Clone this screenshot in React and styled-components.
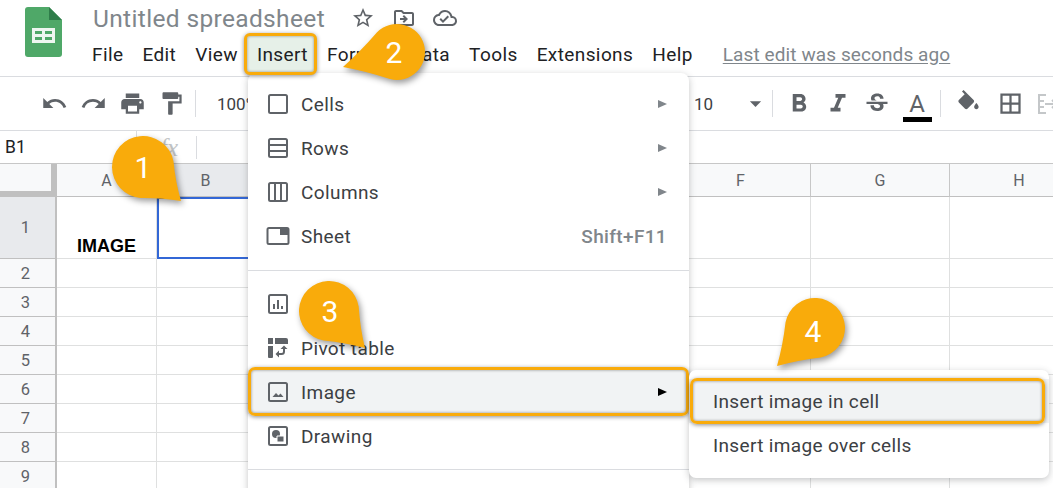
import React from "react";
import styled, { createGlobalStyle } from "styled-components";
import {
  MdUndo,
  MdRedo,
  MdPrint,
  MdFormatPaint,
  MdFormatBold,
  MdFormatItalic,
  MdStrikethroughS,
  MdBorderAll,
  MdStarBorder,
  MdOutlineDriveFileMove,
  MdOutlineCloudDone,
  MdArrowDropDown,
} from "react-icons/md";

const ORANGE = "#f9ab0b";
const GREY = "#5f6368";

const GlobalStyle = createGlobalStyle`
  html, body {
    margin: 0;
    background: #fff;
    overflow: hidden;
  }
  body {
    font-family: Roboto, "Liberation Sans", sans-serif;
  }
`;

const Page = styled.div`
  position: relative;
  width: 1053px;
  height: 488px;
  overflow: hidden;
  background: #fff;
`;

const Header = styled.header`
  display: flex;
  height: 76px;
  border-bottom: 1px solid #dadce0;
  padding-left: 25px;
`;

const Logo = styled.svg`
  width: 37px;
  height: 50px;
  margin-top: 7px;
  flex: none;
`;

const TitleColumn = styled.div`
  margin-left: 30px;
  display: flex;
  flex-direction: column;
`;

const TitleRow = styled.div`
  display: flex;
  align-items: center;
  height: 36px;
`;

const Title = styled.span`
  font-size: 24.5px;
  color: #80868b;
  margin-left: 1px;
  letter-spacing: 0.35px;
  width: 249px;
`;

const TitleIcon = styled.span`
  display: flex;
  justify-content: center;
  width: 41px;
  color: ${GREY};
  font-size: 24px;
`;

const MenuBar = styled.nav`
  display: flex;
  align-items: center;
  gap: 19px;
  height: 36px;
`;

const MenuLabel = styled.span`
  position: relative;
  z-index: ${(p) => (p.$active ? 5 : 1)};
  font-size: 19px;
  letter-spacing: 0.4px;
  color: #202124;

  ${(p) =>
    p.$active &&
    `
    &::before {
      content: "";
      position: absolute;
      z-index: -1;
      left: -13px;
      right: -9px;
      top: -10px;
      bottom: -9px;
      background: #e6f0e8;
      border: 3px solid ${ORANGE};
      border-radius: 6px;
      box-shadow: 0 1px 4px rgba(0, 0, 0, 0.45), inset 0 0 3px rgba(0, 0, 0, 0.4);
    }
  `}
`;

const LastEdit = styled.span`
  margin-left: 11px;
  font-size: 19px;
  letter-spacing: 0.1px;
  color: #80868b;
  text-decoration: underline;
  text-underline-offset: 2px;
`;

const Toolbar = styled.div`
  display: flex;
  align-items: center;
  height: 53px;
  padding-left: 35px;
  border-bottom: 1px solid #dadce0;
  color: ${GREY};
`;

const ToolButton = styled.span`
  display: flex;
  align-items: center;
  justify-content: center;
  flex: none;
  width: ${(p) => p.$w || 39}px;
  font-size: ${(p) => p.$size || 27}px;
  color: ${GREY};
`;

const ToolSep = styled.span`
  flex: none;
  width: 1px;
  height: 27px;
  background: #dadce0;
  margin: 0 ${(p) => p.$right || 0}px 0 ${(p) => p.$left || 0}px;
`;

const ToolText = styled.span`
  flex: none;
  width: ${(p) => p.$w}px;
  margin-left: ${(p) => p.$left || 0}px;
  font-size: 17px;
  color: #3c4043;
`;

const ColorA = styled.span`
  display: flex;
  flex-direction: column;
  align-items: center;
  flex: none;
  width: 40px;
  margin: 5px 0 0 1px;
  font-size: 24px;
  line-height: 26px;
  color: ${GREY};

  &::after {
    content: "";
    width: 29px;
    height: 5px;
    background: #000;
  }
`;

const FormulaBar = styled.div`
  display: flex;
  align-items: center;
  height: 32px;
  border-bottom: 1px solid #c7c7c7;
`;

const CellRef = styled.span`
  width: 131px;
  padding-left: 5px;
  font-size: 17.5px;
  color: #202124;
  border-right: 1px solid #dadce0;
  line-height: 32px;
`;

const Fx = styled.span`
  width: 60px;
  padding-left: 23px;
  box-sizing: border-box;
  font-family: "Liberation Serif", serif;
  font-style: italic;
  font-size: 25px;
  color: #c4c7c9;
  border-right: 1px solid #dadce0;
  line-height: 23px;
`;

const Sheet = styled.div`
  display: grid;
  grid-template-columns: 57px 100px 98px 140px 138px 138px 140px 139px 139px;
  grid-template-rows: 33px 62px repeat(8, 29px);
`;

const Corner = styled.div`
  background: #f8f9fa;
  border-right: 6px solid #c0c0c0;
  border-bottom: 6px solid #c0c0c0;
  box-sizing: border-box;
`;

const ColHead = styled.div`
  display: flex;
  align-items: center;
  justify-content: center;
  box-sizing: border-box;
  background: ${(p) => (p.$selected ? "#e8eaed" : "#f8f9fa")};
  border-right: 1px solid #c7c7c7;
  border-bottom: 1px solid #c0c0c0;
  font-size: 16px;
  color: ${GREY};
`;

const RowHead = styled.div`
  display: flex;
  align-items: center;
  justify-content: center;
  box-sizing: border-box;
  padding-right: 4px;
  background: ${(p) => (p.$selected ? "#e8eaed" : "#f8f9fa")};
  border-right: 2px solid #c0c0c0;
  border-bottom: 1px solid #c0c0c0;
  font-size: 16.5px;
  color: ${GREY};
`;

const Cell = styled.div`
  display: flex;
  align-items: flex-end;
  justify-content: center;
  box-sizing: border-box;
  border-right: 1px solid #dfe0e0;
  border-bottom: 1px solid #dfe0e0;
  font-family: "Liberation Sans", sans-serif;
  font-weight: 700;
  font-size: 18px;
  line-height: 24px;
  color: #000;
  ${(p) => p.$selected && "border: 2px solid #3367d6;"}
`;

const Menu = styled.div`
  position: absolute;
  z-index: 3;
  left: 248px;
  top: 73px;
  width: 441px;
  height: 440px;
  box-sizing: border-box;
  padding-top: 9px;
  background: #fff;
  border-radius: 8px;
  box-shadow: 0 2px 7px rgba(60, 64, 67, 0.3);
`;

const MenuRow = styled.div`
  position: relative;
  display: flex;
  align-items: center;
  height: 44px;
  padding: 0 22px 0 18px;
  font-size: 19px;
  letter-spacing: 0.4px;
  color: #3c4043;
  ${(p) => p.$active && "background: #f1f3f4;"}

  ${(p) =>
    p.$active &&
    `
    &::after {
      content: "";
      position: absolute;
      inset: -3px 0 -2px 0;
      border: 3px solid ${ORANGE};
      border-radius: 7px;
      box-shadow: 0 1px 4px rgba(0, 0, 0, 0.45), inset 0 0 3px rgba(0, 0, 0, 0.45);
    }
  `}
`;

const MenuIcon = styled.svg`
  flex: none;
  width: 24px;
  height: 24px;
  margin-right: 11px;
  color: ${GREY};
`;

const RowLabel = styled.span`
  flex: 1;
`;

const Arrow = styled.span`
  width: 0;
  height: 0;
  border-left: 9px solid ${(p) => (p.$dark ? "#000" : "#80868b")};
  border-top: 4.5px solid transparent;
  border-bottom: 4.5px solid transparent;
`;

const Shortcut = styled.span`
  font-weight: 500;
  font-size: 19px;
  letter-spacing: 0.35px;
  color: #80868b;
`;

const Divider = styled.div`
  height: 1px;
  margin: ${(p) => p.$top || 12}px 0 11px;
  background: #dadce0;
`;

const SubMenu = styled.div`
  position: absolute;
  z-index: 4;
  left: 689px;
  top: 370px;
  width: 360px;
  height: 108px;
  box-sizing: border-box;
  padding-top: 9px;
  background: #fff;
  border-radius: 7px;
  box-shadow: 0 2px 7px rgba(60, 64, 67, 0.3);
`;

const SubRow = styled.div`
  position: relative;
  display: flex;
  align-items: center;
  height: 44px;
  padding-left: 24px;
  font-size: 19px;
  letter-spacing: 0.35px;
  color: #3c4043;
  ${(p) => p.$active && "background: #f1f3f4;"}

  ${(p) =>
    p.$active &&
    `
    &::after {
      content: "";
      position: absolute;
      left: 1px;
      right: 4px;
      top: -1px;
      bottom: -1px;
      border: 3px solid ${ORANGE};
      border-radius: 7px;
      box-shadow: 0 1px 4px rgba(0, 0, 0, 0.45), inset 0 0 3px rgba(0, 0, 0, 0.45);
    }
  `}
`;

const Pin = styled.div`
  position: absolute;
  z-index: 6;
  left: ${(p) => p.$x}px;
  top: ${(p) => p.$y}px;
  width: 110px;
  height: 110px;
`;

const PinShape = styled.svg`
  width: 110px;
  height: 110px;
  overflow: visible;
  filter: drop-shadow(2px 3px 3px rgba(0, 0, 0, 0.4));
`;

const PinNumber = styled.span`
  position: absolute;
  left: ${(p) => p.$x}px;
  top: ${(p) => p.$y}px;
  transform: translate(-50%, -50%);
  font-size: 30px;
  line-height: 30px;
  color: #fff;
`;

// teardrop: circle plus tangent lines running out to the tip
const teardrop = (cx, cy, r, tx, ty) => {
  const d = Math.hypot(tx - cx, ty - cy);
  const a = Math.atan2(ty - cy, tx - cx);
  const b = Math.acos(r / d);
  const p1 = [cx + r * Math.cos(a + b), cy + r * Math.sin(a + b)];
  const p2 = [cx + r * Math.cos(a - b), cy + r * Math.sin(a - b)];
  const ctrl = (p) => [
    (p[0] + tx) / 2 * 0.85 + (cx + (tx - cx) * 0.6) * 0.15,
    (p[1] + ty) / 2 * 0.85 + (cy + (ty - cy) * 0.6) * 0.15,
  ];
  const c1 = ctrl(p1);
  const c2 = ctrl(p2);
  return `M${tx} ${ty}Q${c1[0]} ${c1[1]} ${p1[0]} ${p1[1]}A${r} ${r} 0 1 1 ${p2[0]} ${p2[1]}Q${c2[0]} ${c2[1]} ${tx} ${ty}Z`;
};

const pins = [
  { n: 1, x: 100, y: 125, cx: 143, cy: 167, r: 31, tx: 181, ty: 201, lx: 143, ly: 168 },
  { n: 2, x: 330, y: 10, cx: 397, cy: 52, r: 28, tx: 343, ty: 67, lx: 394, ly: 53 },
  { n: 3, x: 280, y: 270, cx: 329, cy: 311, r: 30, tx: 365, ty: 348, lx: 330, ly: 312 },
  { n: 4, x: 760, y: 285, cx: 815, cy: 328, r: 30, tx: 777, ty: 366, lx: 813, ly: 332 },
];

const menuNames = ["File", "Edit", "View", "Insert", "Format", "Data", "Tools", "Extensions", "Help"];
const columns = ["A", "B", "C", "D", "E", "F", "G", "H"];
const rows = [1, 2, 3, 4, 5, 6, 7, 8, 9];

const SheetsLogo = () => (
  <Logo viewBox="0 0 37 50">
    <path d="M3 0H24L37 13V47a3 3 0 0 1-3 3H3a3 3 0 0 1-3-3V3a3 3 0 0 1 3-3Z" fill="#4fa868" />
    <path d="M24 0L37 13H24Z" fill="#2f7d4a" />
    <path d="M7 21H30V36H7ZM10 24V27H17V24ZM20 24V27H27V24ZM10 30V33H17V30ZM20 30V33H27V30Z" fill="#eef6f0" fillRule="evenodd" />
  </Logo>
);

const CellsIcon = () => (
  <MenuIcon viewBox="0 0 24 24" fill="none" stroke="currentColor" strokeWidth="2">
    <rect x="3" y="3" width="18" height="18" rx="1.5" />
  </MenuIcon>
);

const RowsIcon = () => (
  <MenuIcon viewBox="0 0 24 24" fill="none" stroke="currentColor" strokeWidth="2">
    <rect x="3" y="3" width="18" height="18" rx="1.5" />
    <path d="M3 9h18M3 15h18" />
  </MenuIcon>
);

const ColumnsIcon = () => (
  <MenuIcon viewBox="0 0 24 24" fill="none" stroke="currentColor" strokeWidth="2">
    <rect x="3" y="3" width="18" height="18" rx="1.5" />
    <path d="M9 3v18M15 3v18" />
  </MenuIcon>
);

const SheetIcon = () => (
  <MenuIcon viewBox="0 0 24 24" fill="none" stroke="currentColor" strokeWidth="2">
    <rect x="1.5" y="4" width="21" height="16" rx="1.5" />
    <path d="M14 4h8v7h-8Z" fill="currentColor" stroke="none" />
  </MenuIcon>
);

const ChartIcon = () => (
  <MenuIcon viewBox="0 0 24 24" fill="none" stroke="currentColor" strokeWidth="2">
    <rect x="3" y="3" width="18" height="18" rx="1.5" />
    <path d="M8 17v-5M12 17V8M16 17v-3" />
  </MenuIcon>
);

const PivotIcon = () => (
  <MenuIcon viewBox="0 0 24 24" fill="currentColor">
    <path d="M2 2h5v6H2ZM9 2h11a2 2 0 0 1 2 2v4H9ZM2 10h5v11a1 1 0 0 1-1 1H3a1 1 0 0 1-1-1Z" />
    <path d="M18 9.5l3.5 3.5H19v2.5a3.5 3.5 0 0 1-3.5 3.5H13v2.5L9.5 18l3.5-3.5V17h2.5a1.5 1.5 0 0 0 1.5-1.5V13h-2.5Z" />
  </MenuIcon>
);

const ImageIcon = () => (
  <MenuIcon viewBox="0 0 24 24" fill="none" stroke="currentColor" strokeWidth="2">
    <rect x="3" y="3" width="18" height="18" rx="1.5" />
    <path d="M6.5 17l3.5-4 2.5 2.5 2-2 3 3.5Z" fill="currentColor" stroke="none" />
  </MenuIcon>
);

const DrawingIcon = () => (
  <MenuIcon viewBox="0 0 24 24" fill="none" stroke="currentColor" strokeWidth="2">
    <rect x="3" y="3" width="18" height="18" rx="1.5" />
    <circle cx="10" cy="10" r="4" fill="currentColor" stroke="none" />
    <path d="M11 12h7v6h-7Z" fill="currentColor" stroke="#fff" strokeWidth="1" />
  </MenuIcon>
);

const FillIcon = () => (
  <svg width="27" height="27" viewBox="0 0 24 24" fill="currentColor">
    <path d="M16.56 8.94L7.62 0 6.21 1.41l2.38 2.38-5.15 5.15c-.59.59-.59 1.54 0 2.12l5.5 5.5c.29.29.68.44 1.06.44s.77-.15 1.06-.44l5.5-5.5c.59-.58.59-1.53 0-2.12z" />
    <path d="M19 11.5s-2 2.17-2 3.5c0 1.1.9 2 2 2s2-.9 2-2c0-1.33-2-3.5-2-3.5z" />
  </svg>
);

const MergeIcon = () => (
  <svg width="24" height="24" viewBox="0 0 24 24" fill="none" stroke="#c4c7c9" strokeWidth="2">
    <path d="M10 3H3v18h7M3 9h5M3 15h5M9 12h10M16 8l4 4-4 4" />
  </svg>
);

export default function App() {
  return (
    <Page>
      <GlobalStyle />

      <Header>
        <SheetsLogo />
        <TitleColumn>
          <TitleRow>
            <Title>Untitled spreadsheet</Title>
            <TitleIcon>
              <MdStarBorder />
            </TitleIcon>
            <TitleIcon>
              <MdOutlineDriveFileMove />
            </TitleIcon>
            <TitleIcon>
              <MdOutlineCloudDone />
            </TitleIcon>
          </TitleRow>
          <MenuBar>
            {menuNames.map((name) => (
              <MenuLabel key={name} $active={name === "Insert"}>
                {name}
              </MenuLabel>
            ))}
            <LastEdit>Last edit was seconds ago</LastEdit>
          </MenuBar>
        </TitleColumn>
      </Header>

      <Toolbar>
        <ToolButton><MdUndo /></ToolButton>
        <ToolButton><MdRedo /></ToolButton>
        <ToolButton><MdPrint /></ToolButton>
        <ToolButton><MdFormatPaint /></ToolButton>
        <ToolSep $left={4} />
        <ToolText $left={21} $w={477}>100%</ToolText>
        <ToolText $w={44}>10</ToolText>
        <ToolButton $w={34}><MdArrowDropDown /></ToolButton>
        <ToolSep $right={6} />
        <ToolButton $size={30}><MdFormatBold /></ToolButton>
        <ToolButton $size={30}><MdFormatItalic /></ToolButton>
        <ToolButton $size={28}><MdStrikethroughS /></ToolButton>
        <ColorA>A</ColorA>
        <ToolSep $left={3} $right={8} />
        <ToolButton><FillIcon /></ToolButton>
        <ToolButton $w={45}><MdBorderAll /></ToolButton>
        <ToolButton $w={30}><MergeIcon /></ToolButton>
      </Toolbar>

      <FormulaBar>
        <CellRef>B1</CellRef>
        <Fx>fx</Fx>
      </FormulaBar>

      <Sheet>
        <Corner />
        {columns.map((c) => (
          <ColHead key={c} $selected={c === "B"}>{c}</ColHead>
        ))}
        {rows.map((r) => (
          <React.Fragment key={r}>
            <RowHead $selected={r === 1}>{r}</RowHead>
            {columns.map((c) => (
              <Cell key={c} $selected={r === 1 && c === "B"}>
                {r === 1 && c === "A" ? "IMAGE" : ""}
              </Cell>
            ))}
          </React.Fragment>
        ))}
      </Sheet>

      <Menu>
        <MenuRow><CellsIcon /><RowLabel>Cells</RowLabel><Arrow /></MenuRow>
        <MenuRow><RowsIcon /><RowLabel>Rows</RowLabel><Arrow /></MenuRow>
        <MenuRow><ColumnsIcon /><RowLabel>Columns</RowLabel><Arrow /></MenuRow>
        <MenuRow><SheetIcon /><RowLabel>Sheet</RowLabel><Shortcut>Shift+F11</Shortcut></MenuRow>
        <Divider />
        <MenuRow><ChartIcon /><RowLabel>Chart</RowLabel></MenuRow>
        <MenuRow><PivotIcon /><RowLabel>Pivot table</RowLabel></MenuRow>
        <MenuRow $active><ImageIcon /><RowLabel>Image</RowLabel><Arrow $dark /></MenuRow>
        <MenuRow><DrawingIcon /><RowLabel>Drawing</RowLabel></MenuRow>
        <Divider $top={11} />
      </Menu>

      <SubMenu>
        <SubRow $active>Insert image in cell</SubRow>
        <SubRow>Insert image over cells</SubRow>
      </SubMenu>

      {pins.map((p) => (
        <Pin key={p.n} $x={p.x} $y={p.y}>
          <PinShape viewBox="0 0 110 110">
            <path
              d={teardrop(p.cx - p.x, p.cy - p.y, p.r, p.tx - p.x, p.ty - p.y)}
              fill={ORANGE}
            />
          </PinShape>
          <PinNumber $x={p.lx - p.x} $y={p.ly - p.y}>{p.n}</PinNumber>
        </Pin>
      ))}
    </Page>
  );
}
